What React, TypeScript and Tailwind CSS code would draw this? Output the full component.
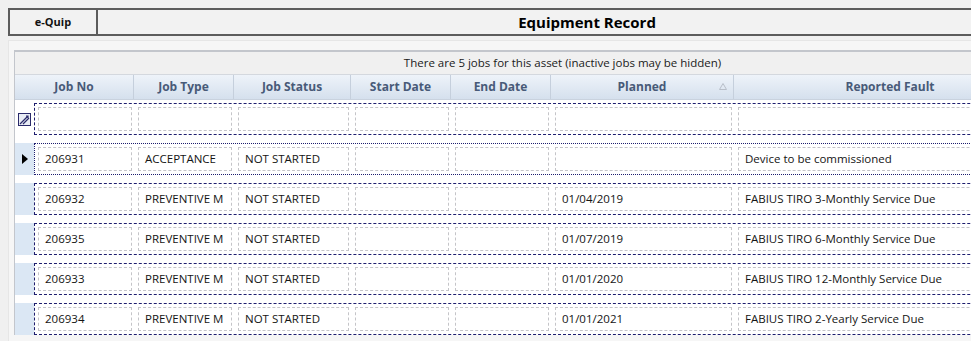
import React from 'react';

const cols = [
  { label: 'Job No', w: 'w-[119px]' },
  { label: 'Job Type', w: 'w-[100px]' },
  { label: 'Job Status', w: 'w-[117px]' },
  { label: 'Start Date', w: 'w-[100px]' },
  { label: 'End Date', w: 'w-[100px]' },
  { label: 'Planned', w: 'w-[183px]', sort: true },
  { label: 'Reported Fault', w: 'w-[313px]' },
  { label: '', w: 'w-[64px]' },
];

const cellWidths = ['w-[94px]', 'w-[94px]', 'w-[111px]', 'w-[94px]', 'w-[94px]', 'w-[177px]', 'w-[306px]'];

const jobs = [
  ['206931', 'ACCEPTANCE', 'NOT STARTED', '', '', '', 'Device to be commissioned'],
  ['206932', 'PREVENTIVE M', 'NOT STARTED', '', '', '01/04/2019', 'FABIUS TIRO 3-Monthly Service Due'],
  ['206935', 'PREVENTIVE M', 'NOT STARTED', '', '', '01/07/2019', 'FABIUS TIRO 6-Monthly Service Due'],
  ['206933', 'PREVENTIVE M', 'NOT STARTED', '', '', '01/01/2020', 'FABIUS TIRO 12-Monthly Service Due'],
  ['206934', 'PREVENTIVE M', 'NOT STARTED', '', '', '01/01/2021', 'FABIUS TIRO 2-Yearly Service Due'],
];

function FilterIcon() {
  return (
    <svg width="13" height="13" viewBox="0 0 13 13">
      <rect x="0.5" y="0.5" width="12" height="12" fill="#e8ecf4" stroke="#2a2a6a" />
      <path d="M2 11 L10 3 M5 11 L11 5 M8 3 L10 3 L10 5" stroke="#2a2a6a" strokeWidth="1.2" fill="none" />
    </svg>
  );
}

function Row({ values, current }: { values: string[]; current?: boolean }) {
  return (
    <div className="flex h-[32px]">
      <div className={`flex w-[19px] items-center justify-center ${values.length ? 'bg-[#dbe7f4]' : ''}`}>
        {current ? (
          <svg width="6" height="10" viewBox="0 0 6 10">
            <path d="M0 0 L6 5 L0 10 Z" fill="#000" />
          </svg>
        ) : null}
        {!values.length ? <FilterIcon /> : null}
      </div>
      <div
        className={`flex flex-1 items-center gap-[6px] border border-[#1d1d6e] pl-[3px] ${current ? 'border-dotted' : 'border-dashed'}`}
      >
        {cellWidths.map((w, i) => (
          <div
            key={i}
            className={`${w} h-[24px] shrink-0 overflow-hidden whitespace-nowrap border border-dashed border-[#c4c4c8] bg-white px-[6px] text-[11.5px] leading-[22px] text-[#141414]`}
          >
            {values[i] || ''}
          </div>
        ))}
      </div>
    </div>
  );
}

export default function App() {
  return (
    <div className="h-[341px] w-[971px] overflow-hidden bg-[#f0f0f0] font-['Open_Sans',sans-serif]">
      <div className="ml-[8px] mt-[8px] flex h-[28px] w-[1070px]">
        <div className="flex w-[90px] items-center justify-center border-2 border-[#5c5c5c] bg-[#f2f2f2] text-[11px] font-bold text-[#111]">
          e-Quip
        </div>
        <div className="flex flex-1 items-center justify-center border-2 border-l-0 border-[#5c5c5c] bg-[#f2f2f2] text-[15px] font-bold text-black">
          Equipment Record
        </div>
      </div>
      <div className="ml-[8px] mt-[4px] h-[400px] w-[1200px] border-l border-t border-[#e6e6e6] bg-[#f6f6f6] pl-[5px] pt-[9px]">
        <div className="w-[1096px] border-l border-t-2 border-[#c3c6cc] bg-white">
          <div className="flex h-[23px] items-center justify-center border-b border-[#d4d8de] bg-[#f0f0f0] text-[11.5px] text-[#1a1a1a]">
            There are 5 jobs for this asset (inactive jobs may be hidden)
          </div>
          <div className="flex h-[25px] border-b border-[#c9d2de] bg-gradient-to-b from-[#eef3f9] to-[#d5e0ed]">
            {cols.map((c, i) => (
              <div
                key={i}
                className={`${c.w} relative flex shrink-0 items-center justify-center border-r border-[#c5cfdc] text-[12px] font-bold text-[#485a78]`}
              >
                {c.label}
                {c.sort ? (
                  <svg className="absolute right-[6px] top-[8px]" width="8" height="7" viewBox="0 0 8 7">
                    <path d="M4 0.5 L7.5 6.5 L0.5 6.5 Z" fill="none" stroke="#b8bec8" />
                  </svg>
                ) : null}
              </div>
            ))}
          </div>
          <div className="flex flex-col gap-[8px] pt-[3px]">
            <Row values={[]} />
            {jobs.map((j, i) => (
              <Row key={j[0]} values={j} current={i === 0} />
            ))}
          </div>
        </div>
      </div>
    </div>
  );
}
